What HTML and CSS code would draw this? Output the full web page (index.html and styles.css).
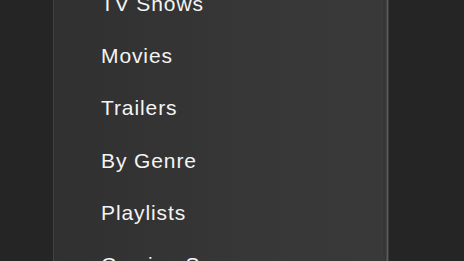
FILE: index.html
```html
<!DOCTYPE html>
<html lang="en">
<head>
  <meta charset="UTF-8">
  <meta name="viewport" content="width=device-width, initial-scale=1.0">
  <title>Library</title>
  <link rel="stylesheet" href="styles.css">
</head>
<body>

  <!-- Library side menu -->
  <div class="menu-panel">
    <ul class="menu-list">
      <li>TV Shows</li>
      <li>Movies</li>
      <li>Trailers</li>
      <li>By Genre</li>
      <li>Playlists</li>
      <li>Coming Soon</li>
    </ul>
  </div>

</body>
</html>
```

FILE: styles.css
```css
body {
  margin: 0;
  padding: 0;
  height: 100vh;
  overflow: hidden;
  background-color: #252525;
  font-family: "Liberation Sans", Arial, sans-serif;
}

/* Main menu column */
.menu-panel {
  margin-left: 53px;
  width: 332px;
  height: 100%;
  background: linear-gradient(to right, #303030, #383838 70%, #393939);
  border-left: 1px solid #424242;
  border-right: 1px solid #464646;
  box-shadow: inset -3px 0 0 #363636, inset -4px 0 0 #3c3c3c, 1px 0 0 #5a5a5a, 2px 0 0 #3a3a3a;
  overflow: hidden;
}

.menu-list {
  list-style-type: none;
  margin: -22px 0 0 0;
  padding: 0 0 0 47px;
}

.menu-list li {
  color: #f4f4f4;
  font-size: 21px;
  line-height: 52.2px;
  letter-spacing: 0.9px;
  white-space: nowrap;
}
```
